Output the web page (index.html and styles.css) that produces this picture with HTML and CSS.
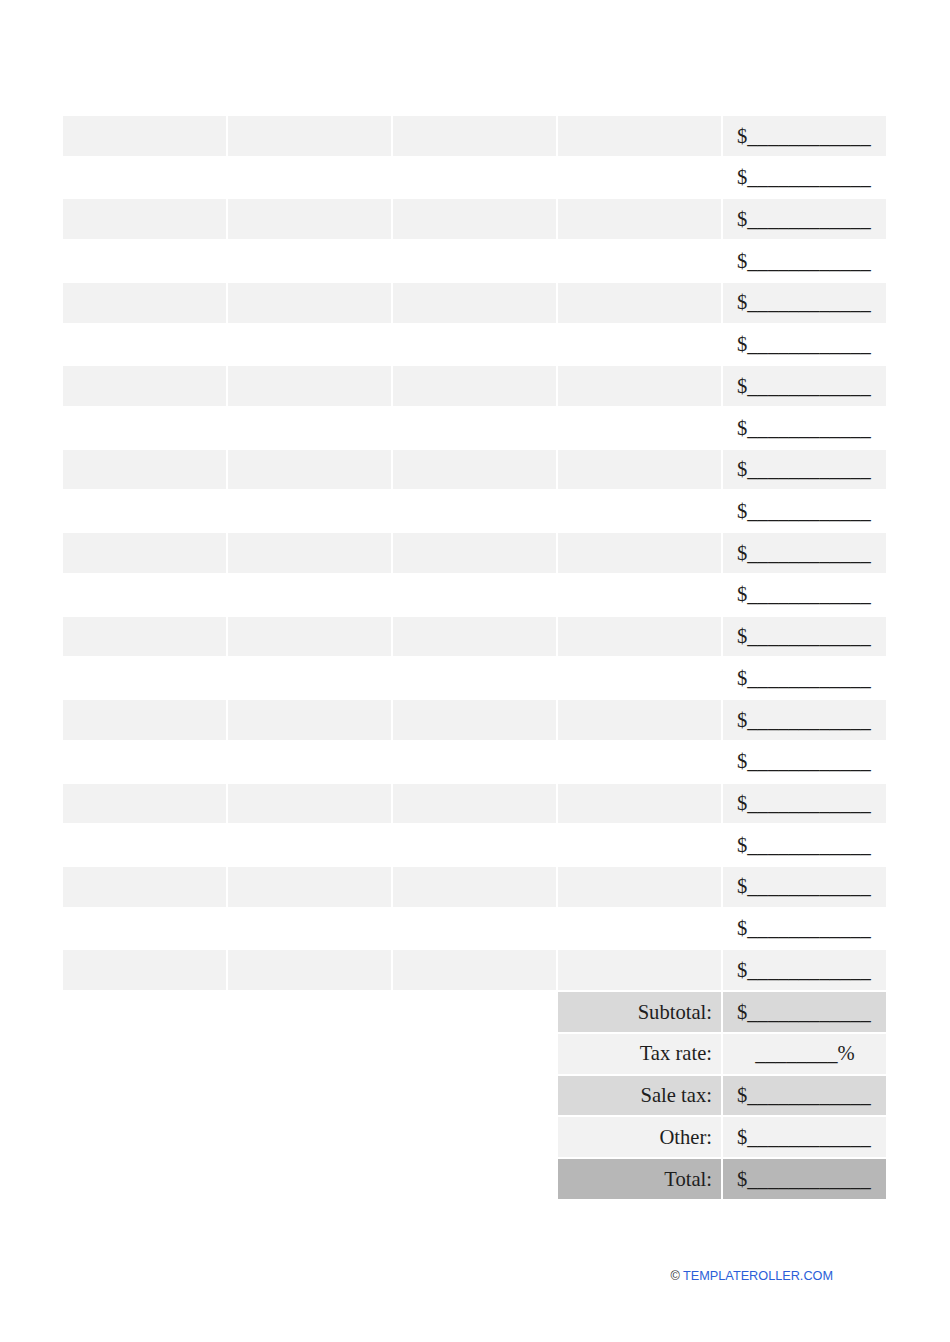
FILE: index.html
```html
<!DOCTYPE html>
<html lang="en">
<head>
  <meta charset="UTF-8" />
  <title>Sales Sheet</title>
  <meta name="viewport" content="width=device-width, initial-scale=1">
  <link rel="stylesheet" href="styles.css">
</head>
<body>
  <main class="sheet">
    <table class="sales-table">
      <tbody>
        <tr class="shaded"><td></td><td></td><td></td><td></td><td class="amount">$____________</td></tr>
        <tr><td></td><td></td><td></td><td></td><td class="amount">$____________</td></tr>
        <tr class="shaded"><td></td><td></td><td></td><td></td><td class="amount">$____________</td></tr>
        <tr><td></td><td></td><td></td><td></td><td class="amount">$____________</td></tr>
        <tr class="shaded"><td></td><td></td><td></td><td></td><td class="amount">$____________</td></tr>
        <tr><td></td><td></td><td></td><td></td><td class="amount">$____________</td></tr>
        <tr class="shaded"><td></td><td></td><td></td><td></td><td class="amount">$____________</td></tr>
        <tr><td></td><td></td><td></td><td></td><td class="amount">$____________</td></tr>
        <tr class="shaded"><td></td><td></td><td></td><td></td><td class="amount">$____________</td></tr>
        <tr><td></td><td></td><td></td><td></td><td class="amount">$____________</td></tr>
        <tr class="shaded"><td></td><td></td><td></td><td></td><td class="amount">$____________</td></tr>
        <tr><td></td><td></td><td></td><td></td><td class="amount">$____________</td></tr>
        <tr class="shaded"><td></td><td></td><td></td><td></td><td class="amount">$____________</td></tr>
        <tr><td></td><td></td><td></td><td></td><td class="amount">$____________</td></tr>
        <tr class="shaded"><td></td><td></td><td></td><td></td><td class="amount">$____________</td></tr>
        <tr><td></td><td></td><td></td><td></td><td class="amount">$____________</td></tr>
        <tr class="shaded"><td></td><td></td><td></td><td></td><td class="amount">$____________</td></tr>
        <tr><td></td><td></td><td></td><td></td><td class="amount">$____________</td></tr>
        <tr class="shaded"><td></td><td></td><td></td><td></td><td class="amount">$____________</td></tr>
        <tr><td></td><td></td><td></td><td></td><td class="amount">$____________</td></tr>
        <tr class="shaded"><td></td><td></td><td></td><td></td><td class="amount">$____________</td></tr>

        <tr class="summary mid"><td></td><td></td><td></td><td class="label">Subtotal:</td><td class="amount">$____________</td></tr>
        <tr class="summary light"><td></td><td></td><td></td><td class="label">Tax rate:</td><td class="amount rate">________%</td></tr>
        <tr class="summary mid"><td></td><td></td><td></td><td class="label">Sale tax:</td><td class="amount">$____________</td></tr>
        <tr class="summary light"><td></td><td></td><td></td><td class="label">Other:</td><td class="amount">$____________</td></tr>
        <tr class="summary dark"><td></td><td></td><td></td><td class="label">Total:</td><td class="amount">$____________</td></tr>
      </tbody>
    </table>
  </main>

  <footer class="site-footer">
    <span class="copy">&copy;</span> <a href="#" class="brand-link">TEMPLATEROLLER.COM</a>
  </footer>
</body>
</html>
```

FILE: styles.css
```css
:root {
  --cell-light: #f2f2f2;
  --cell-mid: #d9d9d9;
  --cell-dark: #b7b7b7;
  --ink: #1e1e1e;
  --link-blue: #2b5ed8;
}
* { box-sizing: border-box; margin: 0; padding: 0; }
body {
  background: #ffffff; color: var(--ink);
  font-family: 'Liberation Serif', 'Times New Roman', serif;
}
.sheet {
  padding: 114px 0 0 61px;
}
.sales-table {
  border-collapse: separate; border-spacing: 2px;
  table-layout: fixed; width: 827px;
}
.sales-table td {
  width: 163px; height: 39.73px; padding: 0;
  font-size: 20.6px; line-height: 1.1; vertical-align: middle;
  white-space: nowrap;
}
.sales-table tr.shaded td { background: var(--cell-light); }
.amount { padding-left: 14px !important; }
.amount.rate { padding-left: 1px !important; text-align: center; }
.label { text-align: right; padding-right: 9px !important; }
.summary.light .label, .summary.light .amount { background: var(--cell-light); }
.summary.mid .label, .summary.mid .amount { background: var(--cell-mid); }
.summary.dark .label, .summary.dark .amount { background: var(--cell-dark); }
.site-footer {
  padding: 68px 117px 0 0; text-align: right;
  font-family: 'Liberation Sans', Arial, sans-serif;
  font-size: 12.7px; line-height: 14px;
}
.copy { color: #333333; }
.brand-link {
  color: var(--link-blue); text-decoration: none;
}
```
